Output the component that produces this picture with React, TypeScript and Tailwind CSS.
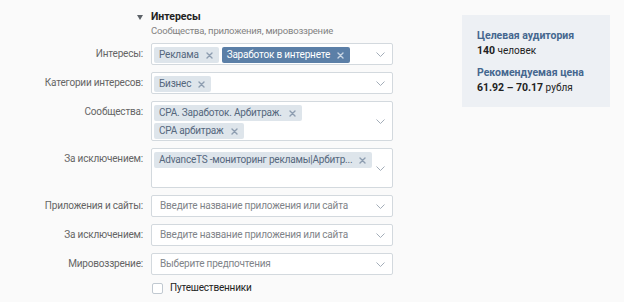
import React from "react";

const Chevron = () => (
  <svg width="9" height="5" viewBox="0 0 9 5" className="shrink-0 self-center mr-[7px]">
    <path d="M0.5 0.5 L4.5 4.5 L8.5 0.5" fill="none" stroke="#a3adb8" strokeWidth="1" />
  </svg>
);

const Cross = ({ color }: { color: string }) => (
  <svg width="7" height="7" viewBox="0 0 7 7" className="shrink-0">
    <path d="M1 1 L6 6 M6 1 L1 6" stroke={color} strokeWidth="1.4" strokeLinecap="round" />
  </svg>
);

const Chip = ({ text, active }: { text: string; active?: boolean }) => (
  <span
    className={
      active
        ? "inline-flex items-center h-[16px] pl-[5px] pr-[6px] gap-[7px] rounded-[2px] bg-[#5b7fa7] text-white text-[10px] leading-[16px] tracking-[-0.2px] whitespace-nowrap"
        : "inline-flex items-center h-[16px] pl-[5px] pr-[6px] gap-[7px] rounded-[2px] bg-[#dee5eb] text-[#55677d] text-[10px] leading-[16px] tracking-[-0.2px] whitespace-nowrap"
    }
  >
    {text}
    <Cross color={active ? "#c9d6e4" : "#8d9db0"} />
  </span>
);

const Label = ({ children }: { children: React.ReactNode }) => (
  <div className="w-[143px] shrink-0 text-right text-[10px] leading-[22px] tracking-[-0.2px] text-[#656565] whitespace-nowrap">
    {children}
  </div>
);

const ChipBox = ({ chips, tall }: { chips: { t: string; a?: boolean }[]; tall?: boolean }) => (
  <div
    className={
      tall
        ? "flex w-[242px] h-[40px] bg-white border border-[#d3d9de] rounded-[2px]"
        : "flex w-[242px] min-h-[22px] bg-white border border-[#d3d9de] rounded-[2px]"
    }
  >
    <div className="flex-1 min-w-0 flex flex-wrap content-start gap-x-[3px] gap-y-[2px] pt-[3px] pb-[1px] pl-[2px]">
      {chips.map((c) => (
        <Chip key={c.t} text={c.t} active={c.a} />
      ))}
    </div>
    <Chevron />
  </div>
);

const InputBox = ({ placeholder }: { placeholder: string }) => (
  <div className="flex items-center w-[242px] h-[22px] bg-white border border-[#d3d9de] rounded-[2px]">
    <div className="flex-1 min-w-0 pl-[8px] text-[10px] leading-[20px] tracking-[-0.2px] text-[#7f8489] whitespace-nowrap">
      {placeholder}
    </div>
    <Chevron />
  </div>
);

const Row = ({ label, children }: { label: string; children: React.ReactNode }) => (
  <div className="flex items-start gap-[8px]">
    <Label>{label}</Label>
    {children}
  </div>
);

export default function App() {
  return (
    <div
      className="w-[624px] h-[302px] bg-[#fafafa] flex overflow-hidden"
      style={{ fontFamily: "Roboto, 'Noto Sans', sans-serif" }}
    >
      <div className="flex flex-col pt-[10px]">
        <div className="flex items-center gap-[8px]">
          <div className="w-[143px] shrink-0 flex justify-end">
            <svg width="6" height="5" viewBox="0 0 6 5">
              <path d="M0 0 L6 0 L3 5 Z" fill="#5d6268" />
            </svg>
          </div>
          <div className="text-[10.5px] leading-[14px] font-bold text-[#222222]">Интересы</div>
        </div>
        <div className="pl-[151px] text-[9.5px] leading-[13px] tracking-[-0.2px] text-[#828282]">
          Сообщества, приложения, мировоззрение
        </div>
        <div className="flex flex-col gap-[7px] mt-[6px]">
          <Row label="Интересы:">
            <ChipBox chips={[{ t: "Реклама" }, { t: "Заработок в интернете", a: true }]} />
          </Row>
          <Row label="Категории интересов:">
            <ChipBox chips={[{ t: "Бизнес" }]} />
          </Row>
          <Row label="Сообщества:">
            <ChipBox tall chips={[{ t: "CPA. Заработок. Арбитраж." }, { t: "CPA арбитраж" }]} />
          </Row>
          <Row label="За исключением:">
            <ChipBox tall chips={[{ t: "AdvanceTS -мониторинг рекламы|Арбитр..." }]} />
          </Row>
          <Row label="Приложения и сайты:">
            <InputBox placeholder="Введите название приложения или сайта" />
          </Row>
          <Row label="За исключением:">
            <InputBox placeholder="Введите название приложения или сайта" />
          </Row>
          <Row label="Мировоззрение:">
            <InputBox placeholder="Выберите предпочтения" />
          </Row>
        </div>
        <div className="flex items-center gap-[7px] mt-[6px] pl-[152px]">
          <div className="w-[11px] h-[11px] border border-[#c1c9d1] rounded-[2px] bg-white" />
          <div className="text-[10px] leading-[14px] tracking-[-0.2px] text-[#222222]">Путешественники</div>
        </div>
      </div>
      <div className="ml-[69px] mt-[15px] w-[148px] h-[92px] bg-[#edf0f4] pl-[15px] pt-[13px] shrink-0">
        <div className="text-[10.5px] leading-[15px] font-bold text-[#45678f] whitespace-nowrap">Целевая аудитория</div>
        <div className="text-[10px] leading-[15px] text-[#222222] whitespace-nowrap">
          <span className="font-bold text-[10.5px]">140</span> человек
        </div>
        <div className="mt-[7px] text-[10.5px] leading-[15px] font-bold text-[#45678f] whitespace-nowrap">
          Рекомендуемая цена
        </div>
        <div className="text-[10px] leading-[15px] text-[#222222] whitespace-nowrap">
          <span className="font-bold text-[10.5px]">61.92 – 70.17</span> рубля
        </div>
      </div>
    </div>
  );
}
